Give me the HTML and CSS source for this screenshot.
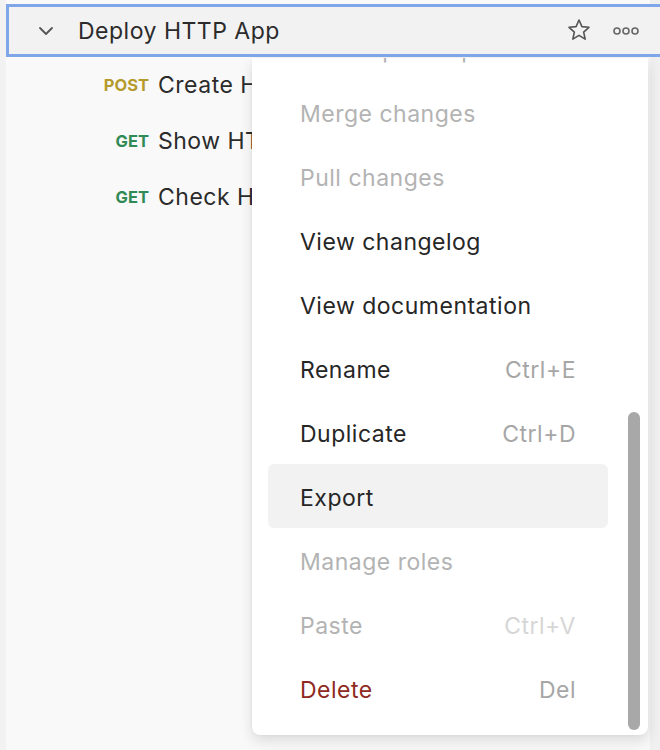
FILE: index.html
```html
<!DOCTYPE html>
<html>
<head>
<meta charset="utf-8">
<link rel="stylesheet" href="styles.css">
</head>
<body>
<div class="sidebar">
  <div class="collection">
    <span class="chev">
      <svg width="16" height="10" viewBox="0 0 16 10"><path d="M2 2 L8 8 L14 2" fill="none" stroke="#555" stroke-width="1.8" stroke-linecap="round" stroke-linejoin="round"/></svg>
    </span>
    <span class="cname">Deploy HTTP App</span>
    <span class="actions">
      <svg class="star" width="26" height="26" viewBox="0 0 24 24"><path d="M12 2.8 L14.7 8.9 L21.2 9.5 L16.3 13.9 L17.7 20.4 L12 17 L6.3 20.4 L7.7 13.9 L2.8 9.5 L9.3 8.9 Z" fill="none" stroke="#555" stroke-width="1.5" stroke-linejoin="round"/></svg>
      <svg class="dots" width="28" height="10" viewBox="0 0 28 10"><circle cx="5" cy="5" r="3" fill="none" stroke="#666" stroke-width="1.6"/><circle cx="14" cy="5" r="3" fill="none" stroke="#666" stroke-width="1.6"/><circle cx="23" cy="5" r="3" fill="none" stroke="#666" stroke-width="1.6"/></svg>
    </span>
  </div>
  <div class="req"><span class="method post">POST</span><span class="rname">Create HTTP App</span></div>
  <div class="req"><span class="method get">GET</span><span class="rname">Show HTTP App</span></div>
  <div class="req"><span class="method get">GET</span><span class="rname">Check HTTP App</span></div>
</div>

<div class="menu">
  <div class="items">
    <div class="item disabled first"><span>Create pull request</span></div>
    <div class="item disabled"><span>Merge changes</span></div>
    <div class="item disabled"><span>Pull changes</span></div>
    <div class="item"><span>View changelog</span></div>
    <div class="item"><span>View documentation</span></div>
    <div class="item"><span>Rename</span><span class="kbd">Ctrl+E</span></div>
    <div class="item"><span>Duplicate</span><span class="kbd">Ctrl+D</span></div>
    <div class="item hover"><span>Export</span></div>
    <div class="item disabled"><span>Manage roles</span></div>
    <div class="item disabled"><span>Paste</span><span class="kbd light">Ctrl+V</span></div>
    <div class="item danger"><span>Delete</span><span class="kbd">Del</span></div>
  </div>
  <div class="thumb"></div>
</div>
</body>
</html>
```

FILE: styles.css
```css
html, body {
  margin: 0;
  padding: 0;
}
body {
  width: 660px;
  height: 750px;
  background: #f9f9f9;
  font-family: Inter, "Noto Sans", sans-serif;
  overflow: hidden;
  position: relative;
}
.sidebar {
  height: 750px;
  border-left: 6px solid #f2f2f2;
  padding-top: 4px;
  box-sizing: border-box;
  background: linear-gradient(to right, #f9f9f9 0, #f9f9f9 644px, #f0f0f0 644px);
}
.collection {
  position: relative;
  z-index: 2;
  height: 53px;
  box-sizing: border-box;
  border: 3px solid #80a6ea;
  border-right: none;
  margin-right: -10px;
  background: #f2f2f2;
  display: flex;
  align-items: center;
}
.chev {
  width: 16px;
  display: flex;
  margin-left: 29px;
  margin-right: 24px;
}
.cname {
  font-size: 23px;
  letter-spacing: 0.5px;
  color: #2b2b2b;
  flex: 1;
}
.actions {
  display: flex;
  align-items: center;
  gap: 20px;
  margin-right: 30px;
}
.star { margin-top: -2px; }
.req {
  height: 56px;
  display: flex;
  align-items: center;
}
.method {
  width: 143px;
  text-align: right;
  font-size: 16.5px;
  font-weight: 700;
  margin-right: 9px;
  letter-spacing: 0;
}
.post { color: #b59a2d; }
.get { color: #2f8a55; }
.rname {
  font-size: 23px;
  letter-spacing: 0.5px;
  color: #2b2b2b;
  white-space: nowrap;
  width: 94px;
  overflow: hidden;
}
.menu {
  position: absolute;
  left: 252px;
  top: 58px;
  width: 396px;
  height: 677px;
  background: #fff;
  border-radius: 0 0 8px 8px;
  box-shadow: 0 6px 14px rgba(0, 0, 0, 0.12), 0 0 3px rgba(0, 0, 0, 0.06);
  overflow: hidden;
  z-index: 1;
}
.items {
  padding: 0 40px 0 16px;
}
.item {
  height: 64px;
  box-sizing: border-box;
  padding: 4px 32px 0;
  display: flex;
  align-items: center;
  justify-content: space-between;
  border-radius: 6px;
  font-size: 23px;
  letter-spacing: 0.5px;
  color: #262626;
  white-space: nowrap;
}
.item.first { margin-top: -42px; }
.item.disabled { color: #b3b3b3; }
.item.danger { color: #8f2a22; }
.item.hover { background: #f2f2f2; }
.kbd { color: #a6a6a6; }
.kbd.light { color: #d6d6d6; }
.thumb {
  position: absolute;
  left: 376px;
  top: 354px;
  width: 12px;
  height: 318px;
  border-radius: 6px;
  background: #a8a8a8;
}
```
